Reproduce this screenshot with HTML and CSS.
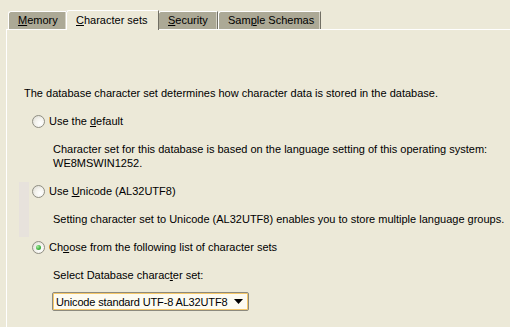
FILE: index.html
```html
<!DOCTYPE html>
<html>
<head>
<meta charset="utf-8">
<link rel="stylesheet" href="styles.css">
</head>
<body>
<div class="window">
  <div class="tabs">
    <div class="tab tab-memory"><u>M</u>emory</div>
    <div class="tab tab-charset active"><u>C</u>haracter sets</div>
    <div class="tab tab-security"><u>S</u>ecurity</div>
    <div class="tab tab-schemas">Sam<u>p</u>le Schemas</div>
  </div>
  <div class="panel">
    <p class="intro">The database character set determines how character data is stored in the database.</p>

    <div class="option opt-default">
      <div class="radio-row"><span class="radio"></span><span>Use the <u>d</u>efault</span></div>
      <p class="desc desc-default">Character set for this database is based on the language setting of this operating system:<br>WE8MSWIN1252.</p>
    </div>

    <div class="option opt-unicode">
      <div class="radio-row"><span class="radio"></span><span>Use <u>U</u>nicode (AL32UTF8)</span></div>
      <p class="desc desc-unicode">Setting character set to Unicode (AL32UTF8) enables you to store multiple language groups.</p>
    </div>

    <div class="option opt-choose">
      <div class="radio-row"><span class="radio checked"></span><span>Ch<u>o</u>ose from the following list of character sets</span></div>
      <p class="select-label">Select Database charac<u>t</u>er set:</p>
      <div class="select">
        <span class="select-text">Unicode standard UTF-8 AL32UTF8</span>
        <span class="select-arrow"></span>
      </div>
    </div>
  </div>
</div>
</body>
</html>
```

FILE: styles.css
```css
html, body {
  margin: 0;
  padding: 0;
}
body {
  background: #ECE9D8;
  color: #000;
  font-family: "Liberation Sans", Arial, sans-serif;
  font-size: 11px;
  line-height: 14px;
  width: 510px;
  height: 327px;
  overflow: hidden;
}
u {
  text-decoration: underline;
  text-underline-offset: 1px;
}
p {
  margin: 0;
}
.window {
  display: flex;
  flex-direction: column;
  height: 100%;
}
.tabs {
  display: flex;
  align-items: flex-end;
  height: 29px;
  padding-left: 8px;
  box-sizing: border-box;
}
.tab {
  height: 18px;
  box-sizing: border-box;
  background: #ACA996;
  border-top: 1px solid #FFFFFF;
  border-left: 1px solid #FFFFFF;
  border-right: 1px solid #716F64;
  border-top-left-radius: 3px;
  box-shadow: inset -1px 0 0 #D6D3C6;
  padding-left: 9px;
  line-height: 16px;
  white-space: nowrap;
}
.tab-memory { width: 59px; }
.tab-charset { width: 93px; }
.tab-security { width: 60px; }
.tab-schemas { width: 103px; }
.tab.active {
  background: #ECE9D8;
  height: 20px;
  margin-bottom: -1px;
  margin-left: -1px;
  margin-right: -1px;
  position: relative;
  z-index: 1;
  line-height: 18px;
  box-shadow: none;
}
.panel {
  flex: 1;
  margin-left: 6px;
  border-top: 1px solid #FFFFFF;
  border-left: 1px solid #FFFFFF;
  padding: 56px 0 0 17px;
}
.intro {
  white-space: nowrap;
}
.option {
  display: flex;
  flex-direction: column;
}
.radio-row {
  display: flex;
  align-items: center;
  gap: 4px;
  padding-left: 8px;
  height: 14px;
}
.radio {
  width: 13px;
  height: 13px;
  box-sizing: border-box;
  border-radius: 50%;
  border: 1px solid #8F8E83;
  background: radial-gradient(circle at 65% 65%, #FFFFFF 0%, #F4F3EE 45%, #D8D6CC 100%);
  display: flex;
  align-items: center;
  justify-content: center;
}
.radio.checked::after {
  content: "";
  width: 5px;
  height: 5px;
  border-radius: 50%;
  background: radial-gradient(circle at 35% 35%, #A8EBA0 0%, #4BB94B 50%, #248A24 100%);
}
.opt-default {
  margin-top: 14px;
}
.desc {
  padding-left: 29px;
  white-space: nowrap;
}
.desc-default {
  margin-top: 14px;
}
.opt-unicode {
  margin-top: 12px;
  margin-left: -6px;
  padding: 2px 0 11px 6px;
  background: linear-gradient(to right, transparent 0, transparent 1px, #E7E2DC 1px, #E7E2DC 11px, transparent 11px);
}
.desc-unicode {
  margin-top: 14px;
}
.opt-choose {
  margin-top: 3px;
}
.select-label {
  margin-top: 14px;
  padding-left: 29px;
}
.select {
  margin: 10px 0 0 28px;
  width: 197px;
  height: 19px;
  box-sizing: border-box;
  border: 1px solid #8C8A7E;
  border-radius: 2px;
  box-shadow: inset 0 0 0 1px #F5C86A;
  background: #FDFBF1;
  display: flex;
  align-items: center;
  justify-content: space-between;
  padding: 0 5px 0 3px;
}
.select-text {
  line-height: 14px;
  letter-spacing: -0.15px;
}
.select-arrow {
  width: 9px;
  height: 5px;
  background: #000;
  clip-path: polygon(0 0, 100% 0, 50% 100%);
}
```
